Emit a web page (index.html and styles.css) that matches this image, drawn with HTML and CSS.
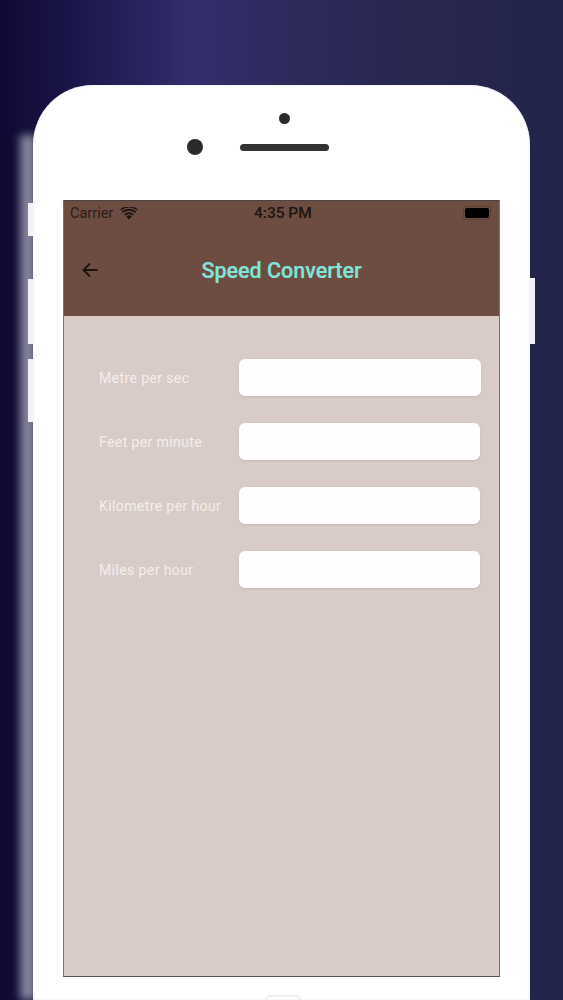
FILE: index.html
```html
<!DOCTYPE html>
<html lang="en">
<head>
    <meta charset="UTF-8">
    <meta name="viewport" content="width=device-width, initial-scale=1.0">
    <title>Speed Converter</title>
    <link rel="stylesheet" href="styles.css">
</head>
<body>
    <div class="phone">
        <!-- Bandas laterales del marco -->
        <div class="glow"></div>
        <div class="side-btn btn-mute"></div>
        <div class="side-btn btn-up"></div>
        <div class="side-btn btn-down"></div>
        <div class="side-btn btn-power"></div>

        <div class="phone-top">
            <span class="sensor"></span>
            <span class="camera"></span>
            <span class="speaker"></span>
        </div>

        <div class="screen">
            <header class="app-header">
                <div class="status-bar">
                    <div class="status-left">
                        <span>Carrier</span>
                        <svg class="wifi" viewBox="0 0 18 13" width="18" height="13">
                            <path d="M9 12.6 6.3 9.6a4 4 0 0 1 5.4 0z" fill="#1d1410"/>
                            <path d="M4.7 7.9a6.4 6.4 0 0 1 8.6 0" fill="none" stroke="#1d1410" stroke-width="1.9"/>
                            <path d="M2.3 5.3a9.9 9.9 0 0 1 13.4 0" fill="none" stroke="#1d1410" stroke-width="1.9"/>
                            <path d="M.6 3a12.6 12.6 0 0 1 16.8 0" fill="none" stroke="#1d1410" stroke-width="1.2"/>
                        </svg>
                    </div>
                    <span class="clock">4:35 PM</span>
                    <div class="battery"><span class="battery-fill"></span></div>
                </div>
                <div class="title-bar">
                    <button class="back-btn" title="Back">
                        <svg viewBox="0 0 18 18" width="18" height="18">
                            <path d="M16.5 9H2.5M9 2.5 2.5 9 9 15.5" fill="none" stroke="#1d1410" stroke-width="1.8"/>
                        </svg>
                    </button>
                    <h1>Speed Converter</h1>
                </div>
            </header>

            <main class="converter">
                <div class="field">
                    <label for="mps">Metre per sec</label>
                    <input id="mps" class="input-wide" type="text">
                </div>
                <div class="field">
                    <label for="fpm">Feet per minute</label>
                    <input id="fpm" type="text">
                </div>
                <div class="field">
                    <label for="kph">Kilometre per hour</label>
                    <input id="kph" type="text">
                </div>
                <div class="field">
                    <label for="mph">Miles per hour</label>
                    <input id="mph" type="text">
                </div>
            </main>
        </div>

        <div class="home-btn"></div>
    </div>
</body>
</html>
```

FILE: styles.css
```css
html, body {
    height: 100%;
}

body {
    margin: 0;
    height: 1000px;
    overflow: hidden;
    box-sizing: border-box;
    padding: 85px 33px 0 33px;
    font-family: "Roboto", "Liberation Sans", sans-serif;
    background: linear-gradient(90deg, #0f0a33 0, #15103f 40px, #2a2560 150px, #342e6e 190px, #2d2a5c 290px, #282750 400px, #23244a 563px);
}

.phone {
    position: relative;
    width: 497px;
    height: 915px;
    background: #fff;
    border-radius: 60px 60px 0 0;
    box-shadow: inset 0 0 3px #e4e4ee;
    display: flex;
    flex-direction: column;
}

/* Franja borrosa a la izquierda del marco */
.glow {
    position: absolute;
    z-index: -1;
    left: -13px;
    top: 50px;
    bottom: 0;
    width: 16px;
    background: #85849c;
    filter: blur(4px);
}

.side-btn {
    position: absolute;
    width: 5px;
    background: #f1f1f7;
}

.btn-mute { left: -5px; top: 118px; height: 33px; }
.btn-up { left: -5px; top: 194px; height: 65px; }
.btn-down { left: -5px; top: 274px; height: 63px; }
.btn-power { right: -5px; top: 193px; height: 66px; }

.phone-top {
    position: relative;
    height: 115px;
    flex-shrink: 0;
}

.sensor {
    position: absolute;
    left: 246px;
    top: 28px;
    width: 11px;
    height: 11px;
    border-radius: 50%;
    background: #2b2b2b;
}

.camera {
    position: absolute;
    left: 154px;
    top: 54px;
    width: 16px;
    height: 16px;
    border-radius: 50%;
    background: #2b2b2b;
}

.speaker {
    position: absolute;
    left: 207px;
    top: 59px;
    width: 89px;
    height: 7px;
    border-radius: 4px;
    background: #333;
}

.screen {
    width: 437px;
    height: 777px;
    margin-left: 30px;
    box-sizing: border-box;
    border: 1px solid #7a7472;
    border-top-color: #4a4442;
    border-bottom-color: #5a5452;
    background: #d9ccc8;
    display: flex;
    flex-direction: column;
}

.app-header {
    height: 115px;
    background: #6d4c41;
    flex-shrink: 0;
}

.status-bar {
    display: flex;
    justify-content: space-between;
    align-items: center;
    height: 24px;
    padding: 0 6px;
    font-size: 14.5px;
    color: #2a1d18;
    position: relative;
}

.status-left {
    display: flex;
    align-items: center;
    gap: 7px;
}

.clock {
    position: absolute;
    left: 190px;
    font-size: 15.5px;
    font-weight: 500;
    color: #1d1410;
}

.battery {
    width: 28px;
    height: 14px;
    padding: 1px;
    box-sizing: border-box;
    border: 1px solid #5d4037;
    border-radius: 3px;
    margin-right: 2px;
}

.battery-fill {
    display: block;
    height: 100%;
    background: #000;
    border-radius: 2px;
}

.title-bar {
    position: relative;
    height: 91px;
    display: flex;
    align-items: center;
    justify-content: center;
}

.title-bar h1 {
    margin: 0;
    font-size: 21.5px;
    font-weight: 500;
    color: #80e6db;
    -webkit-text-stroke: 0.2px #80e6db;
}

.back-btn {
    position: absolute;
    left: 17px;
    top: 36px;
    padding: 0;
    border: none;
    background: none;
    line-height: 0;
}

.converter {
    padding: 43px 18px 0 35px;
    display: flex;
    flex-direction: column;
    gap: 27px;
}

.field {
    display: flex;
    align-items: center;
}

.field label {
    width: 140px;
    flex-shrink: 0;
    font-size: 14px;
    letter-spacing: 0.4px;
    color: #f5eeeb;
}

.field input {
    width: 241px;
    height: 37px;
    box-sizing: border-box;
    border: none;
    border-radius: 6px;
    background: #fffefe;
    box-shadow: 0 1px 2px rgba(120, 100, 95, 0.2);
    outline: none;
}

.field input.input-wide {
    width: 242px;
}

/* Solo asoma el borde superior del botón */
.home-btn {
    position: absolute;
    left: 232px;
    bottom: 0;
    width: 36px;
    height: 5px;
    box-sizing: border-box;
    border: 2px solid #eeeef0;
    border-bottom: none;
    border-radius: 18px 18px 0 0;
}
```
